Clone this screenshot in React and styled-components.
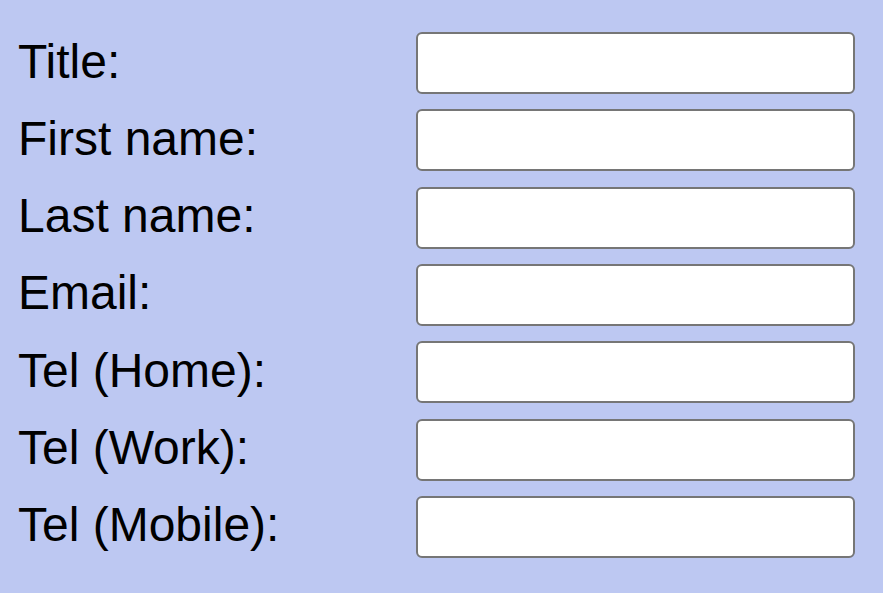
import styled, { createGlobalStyle } from "styled-components";

const GlobalStyle = createGlobalStyle`
  html, body {
    margin: 0;
    padding: 0;
    background: #bdc8f2;
  }
`;

const Page = styled.div`
  box-sizing: border-box;
  width: 883px;
  height: 593px;
  padding: 32px 28px 0 16px;
  background: #bdc8f2;
`;

const Form = styled.form`
  display: grid;
  grid-template-columns: 1fr 439px;
  row-gap: 15.33px;
  font-family: Helvetica, "Liberation Sans", Arial, sans-serif;
`;

const Row = styled.div`
  display: contents;
`;

const Label = styled.label`
  display: flex;
  align-items: center;
  font-size: 48px;
  color: #000;
  line-height: 1;
  padding: 0 0 3px 2px;
`;

const Field = styled.input`
  box-sizing: border-box;
  width: 100%;
  height: 62px;
  margin: 0;
  padding: 0 8px;
  font-size: 28px;
  background: #fff;
  border: 2px solid #767676;
  border-radius: 6px;
  outline: none;
`;

const fields = [
  "Title:",
  "First name:",
  "Last name:",
  "Email:",
  "Tel (Home):",
  "Tel (Work):",
  "Tel (Mobile):",
];

const App = () => {
  return (
    <>
      <GlobalStyle />
      <Page>
        <Form>
          {fields.map((label, i) => (
            <Row key={label}>
              <Label htmlFor={"f" + i}>{label}</Label>
              <Field id={"f" + i} type="text" />
            </Row>
          ))}
        </Form>
      </Page>
    </>
  );
};

export default App;
